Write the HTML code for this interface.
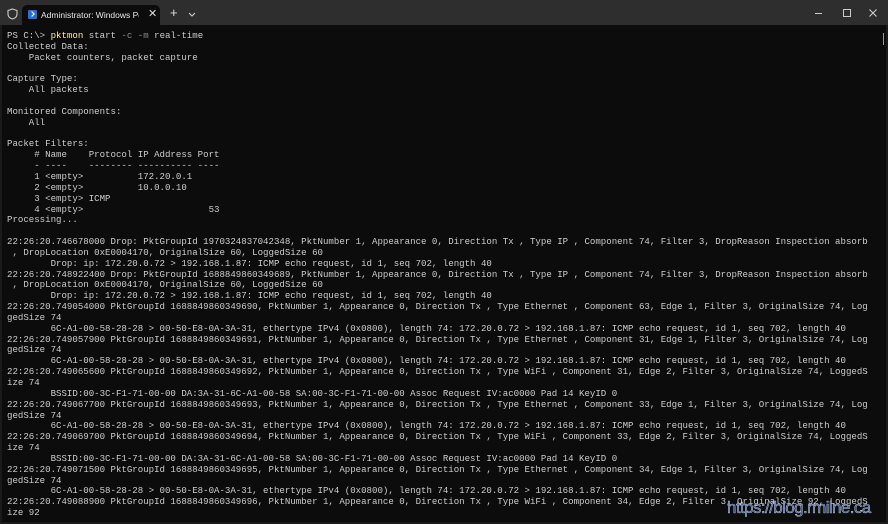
<!DOCTYPE html>
<html><head><meta charset="utf-8">
<style>
html,body{margin:0;padding:0;background:#0c0c0c;width:888px;height:524px;overflow:hidden}
.frame{position:absolute;left:0;top:0;width:888px;height:524px;background:#0c0c0c;box-sizing:border-box;border:2px solid #1a1a1a}
.title{position:absolute;left:0;top:0;width:888px;height:25px;background:#2e2e2e}
.tab{position:absolute;left:22px;top:5px;width:138px;height:20px;background:#0c0c0c;border-radius:5px 5px 0 0}
.tab .t{position:absolute;left:19px;top:5px;font:8.5px "Liberation Sans",sans-serif;color:#e8e8e8;white-space:nowrap;width:98px;overflow:hidden}
.tab .x{position:absolute;left:126px;top:2px;font:11px "Liberation Sans",sans-serif;color:#ddd}
.ps{position:absolute;left:6px;top:5px;width:9px;height:9px;background:#2a6fd6;border-radius:1px}
.ps:after{content:"";position:absolute;left:2px;top:2px;width:3px;height:3px;border-right:1px solid #fff;border-bottom:1px solid #fff;transform:rotate(-45deg)}
pre{position:absolute;left:7px;top:31px;margin:0;font-family:"Liberation Mono",monospace;font-size:9.08px;line-height:10.85px;color:#cccccc}
.y{color:#f9f1a5}.g{color:#8a8a8a}
.wm{position:absolute;left:727px;top:498px;font:17px "Liberation Sans",sans-serif;color:#3b5998;-webkit-text-stroke:0.3px #fff;letter-spacing:-0.6px}
</style></head><body>
<div class="frame"></div>
<div class="title">
<svg style="position:absolute;left:7px;top:8px" width="11" height="12" viewBox="0 0 11 12"><path d="M5.5 1 L10 2.5 V6 C10 8.5 8 10.3 5.5 11 C3 10.3 1 8.5 1 6 V2.5 Z" fill="none" stroke="#ccc" stroke-width="1.1"/></svg>
<div class="tab"><div class="ps"></div><div class="t">Administrator: Windows Pow</div><div class="x">✕</div></div>
<div style="position:absolute;left:170px;top:5px;font:13px 'Liberation Sans',sans-serif;color:#ddd">+</div>
<svg style="position:absolute;left:188px;top:12px" width="8" height="5"><path d="M1 1 L4 4 L7 1" fill="none" stroke="#ccc" stroke-width="1.1"/></svg>
<div style="position:absolute;left:815px;top:13px;width:7px;height:1px;background:#ccc"></div>
<div style="position:absolute;left:843px;top:9px;width:6px;height:6px;border:1px solid #ccc"></div>
<svg style="position:absolute;left:869px;top:9px" width="8" height="8"><path d="M0.5 0.5 L7.5 7.5 M7.5 0.5 L0.5 7.5" stroke="#ccc" stroke-width="1.1"/></svg>
</div>
<div style="position:absolute;left:883px;top:33px;width:1px;height:12px;background:#999"></div>
<pre>PS C:\&gt; <span class="y">pktmon</span> start <span class="g">-c -m</span> real-time
Collected Data:
    Packet counters, packet capture

Capture Type:
    All packets

Monitored Components:
    All

Packet Filters:
     # Name    Protocol IP Address Port
     - ----    -------- ---------- ----
     1 &lt;empty&gt;          172.20.0.1
     2 &lt;empty&gt;          10.0.0.10
     3 &lt;empty&gt; ICMP
     4 &lt;empty&gt;                       53
Processing...

22:26:20.746678000 Drop: PktGroupId 1970324837042348, PktNumber 1, Appearance 0, Direction Tx , Type IP , Component 74, Filter 3, DropReason Inspection absorb
 , DropLocation 0xE0004170, OriginalSize 60, LoggedSize 60
        Drop: ip: 172.20.0.72 &gt; 192.168.1.87: ICMP echo request, id 1, seq 702, length 40
22:26:20.748922400 Drop: PktGroupId 1688849860349689, PktNumber 1, Appearance 0, Direction Tx , Type IP , Component 74, Filter 3, DropReason Inspection absorb
 , DropLocation 0xE0004170, OriginalSize 60, LoggedSize 60
        Drop: ip: 172.20.0.72 &gt; 192.168.1.87: ICMP echo request, id 1, seq 702, length 40
22:26:20.749054000 PktGroupId 1688849860349690, PktNumber 1, Appearance 0, Direction Tx , Type Ethernet , Component 63, Edge 1, Filter 3, OriginalSize 74, Log
gedSize 74
        6C-A1-00-58-28-28 &gt; 00-50-E8-0A-3A-31, ethertype IPv4 (0x0800), length 74: 172.20.0.72 &gt; 192.168.1.87: ICMP echo request, id 1, seq 702, length 40
22:26:20.749057900 PktGroupId 1688849860349691, PktNumber 1, Appearance 0, Direction Tx , Type Ethernet , Component 31, Edge 1, Filter 3, OriginalSize 74, Log
gedSize 74
        6C-A1-00-58-28-28 &gt; 00-50-E8-0A-3A-31, ethertype IPv4 (0x0800), length 74: 172.20.0.72 &gt; 192.168.1.87: ICMP echo request, id 1, seq 702, length 40
22:26:20.749065600 PktGroupId 1688849860349692, PktNumber 1, Appearance 0, Direction Tx , Type WiFi , Component 31, Edge 2, Filter 3, OriginalSize 74, LoggedS
ize 74
        BSSID:00-3C-F1-71-00-00 DA:3A-31-6C-A1-00-58 SA:00-3C-F1-71-00-00 Assoc Request IV:ac0000 Pad 14 KeyID 0
22:26:20.749067700 PktGroupId 1688849860349693, PktNumber 1, Appearance 0, Direction Tx , Type Ethernet , Component 33, Edge 1, Filter 3, OriginalSize 74, Log
gedSize 74
        6C-A1-00-58-28-28 &gt; 00-50-E8-0A-3A-31, ethertype IPv4 (0x0800), length 74: 172.20.0.72 &gt; 192.168.1.87: ICMP echo request, id 1, seq 702, length 40
22:26:20.749069700 PktGroupId 1688849860349694, PktNumber 1, Appearance 0, Direction Tx , Type WiFi , Component 33, Edge 2, Filter 3, OriginalSize 74, LoggedS
ize 74
        BSSID:00-3C-F1-71-00-00 DA:3A-31-6C-A1-00-58 SA:00-3C-F1-71-00-00 Assoc Request IV:ac0000 Pad 14 KeyID 0
22:26:20.749071500 PktGroupId 1688849860349695, PktNumber 1, Appearance 0, Direction Tx , Type Ethernet , Component 34, Edge 1, Filter 3, OriginalSize 74, Log
gedSize 74
        6C-A1-00-58-28-28 &gt; 00-50-E8-0A-3A-31, ethertype IPv4 (0x0800), length 74: 172.20.0.72 &gt; 192.168.1.87: ICMP echo request, id 1, seq 702, length 40
22:26:20.749088900 PktGroupId 1688849860349696, PktNumber 1, Appearance 0, Direction Tx , Type WiFi , Component 34, Edge 2, Filter 3, OriginalSize 92, LoggedS
ize 92</pre>
<div class="wm">https://blog.rmilne.ca</div>
</body></html>
